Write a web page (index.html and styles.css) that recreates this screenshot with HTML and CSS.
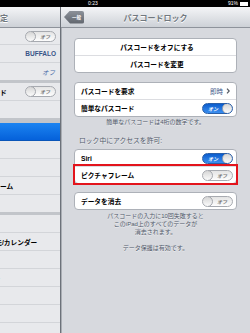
FILE: index.html
```html
<!DOCTYPE html>
<html lang="ja">
<head>
  <meta charset="UTF-8" />
  <meta name="viewport" content="width=device-width, initial-scale=1.0"/>
  <title>パスコードロック</title>
  <link rel="stylesheet" href="styles.css">
</head>
<body>
  <!-- Status bar -->
  <div class="statusbar">
    <span class="clock">0:23</span>
    <span class="battery">91% <i class="battery-icon"></i></span>
  </div>

  <div class="split">
    <!-- Master list (cut off on the left) -->
    <aside class="master">
      <div class="navbar"><span class="master-title">設定</span></div>
      <ul class="menu">
        <li class="menu-row first"><span class="menu-label">機内モード</span><span class="switch off"><span class="knob"></span><span class="state">オフ</span></span></li>
        <li class="menu-row"><span class="menu-label">Wi-Fi</span><span class="menu-value">BUFFALO</span></li>
        <li class="menu-row section-end"><span class="menu-label">Bluetooth</span><span class="menu-value light">オフ</span></li>
        <li class="menu-row"><span class="menu-label">おやすみモード</span><span class="switch off"><span class="knob"></span><span class="state">オフ</span></span></li>
        <li class="menu-row section-end wide"><span class="menu-label">通知</span></li>
        <li class="menu-row selected"><span class="menu-label">一般</span></li>
        <li class="menu-row"><span class="menu-label">サウンド</span></li>
        <li class="menu-row"><span class="menu-label">明るさ/壁紙</span></li>
        <li class="menu-row"><span class="menu-label">ピクチャフレーム</span></li>
        <li class="menu-row section-end"><span class="menu-label">プライバシー</span></li>
        <li class="menu-row"><span class="menu-label">iCloud</span></li>
        <li class="menu-row"><span class="menu-label">メール/連絡先/カレンダー</span></li>
        <li class="menu-row"><span class="menu-label">メモ</span></li>
        <li class="menu-row"><span class="menu-label">リマインダー</span></li>
        <li class="menu-row"><span class="menu-label">メッセージ</span></li>
        <li class="menu-row"><span class="menu-label">FaceTime</span></li>
        <li class="menu-row"><span class="menu-label">マップ</span></li>
      </ul>
    </aside>

    <!-- Detail pane -->
    <main class="detail">
      <div class="navbar detail-nav">
        <button class="back">一般</button>
        <h1 class="title">パスコードロック</h1>
      </div>

      <div class="content">
        <div class="group">
          <div class="cell center">パスコードをオフにする</div>
          <div class="cell center">パスコードを変更</div>
        </div>

        <div class="group">
          <div class="cell">パスコードを要求<span class="detail-value">即時
            <svg class="chevron" viewBox="0 0 4 6" width="4" height="6"><path d="M1 0.6 L3.2 3 L1 5.4" fill="none" stroke="#555a63" stroke-width="1.2"/></svg></span></div>
          <div class="cell">簡単なパスコード<span class="switch on"><span class="state">オン</span><span class="knob"></span></span></div>
        </div>
        <p class="footnote">簡単なパスコードは4桁の数字です。</p>

        <p class="section-header">ロック中にアクセスを許可:</p>
        <div class="group tight">
          <div class="cell">Siri<span class="switch on"><span class="state">オン</span><span class="knob"></span></span></div>
          <div class="cell highlight">ピクチャフレーム<span class="switch off"><span class="knob"></span><span class="state">オフ</span></span></div>
        </div>

        <div class="group spaced">
          <div class="cell">データを消去<span class="switch off"><span class="knob"></span><span class="state">オフ</span></span></div>
        </div>
        <p class="footnote">パスコードの入力に10回失敗すると<br>このiPad上のすべてのデータが<br>消去されます。</p>
        <p class="footnote last">データ保護は有効です。</p>
      </div>
    </main>
  </div>
</body>
</html>
```

FILE: styles.css
```css
:root {
  --nav-title: #71787f;
  --detail-blue: #385487;
  --footer-text: #535b6b;
  --group-bg: #d7d9de;
}

* {
  box-sizing: border-box;
  margin: 0;
  padding: 0;
}

body {
  width: 250px;
  height: 333px;
  overflow: hidden;
  font-family: "Liberation Sans", "Noto Sans CJK JP", sans-serif;
  background: var(--group-bg);
  color: #000;
}

/* Status bar */
.statusbar {
  height: 7px;
  background: #000;
  color: #fff;
  display: flex;
  align-items: center;
  font-size: 5px;
  line-height: 7px;
  padding-right: 2px;
}

.clock {
  margin-left: 88px;
}

.battery {
  margin-left: auto;
  display: flex;
  align-items: center;
  gap: 2px;
}

.battery-icon {
  display: block;
  width: 8px;
  height: 4px;
  background: #fff;
  border: 1px solid #fff;
}

.split {
  display: flex;
  height: 326px;
}

/* Nav bars */
.navbar {
  height: 21px;
  background: linear-gradient(#f4f5f7, #cdd1d7);
  border-bottom: 1px solid #8e939b;
  display: flex;
  align-items: center;
}

.master {
  width: 61px;
  flex: none;
  background: #e8e9ec;
  border-right: 1px solid #6c7179;
  overflow: hidden;
}

.master-title {
  font-size: 8px;
  font-weight: bold;
  color: var(--nav-title);
  margin-left: -8px;
  white-space: nowrap;
  text-shadow: 0 1px 0 #fff;
}

/* Master list */
.menu {
  list-style: none;
}

.menu-row {
  height: 18px;
  display: flex;
  align-items: center;
  padding-right: 4px;
  border-bottom: 1px solid #d3d5d9;
  font-size: 6.7px;
  font-weight: bold;
  white-space: nowrap;
}

.menu-row.first {
  height: 17px;
}

.menu-row.section-end {
  height: 20px;
  border-bottom: 3px solid #c2c5ca;
}

.menu-row.wide {
  height: 22px;
  border-bottom-width: 5px;
}

.menu-row.selected {
  background: linear-gradient(#1c84f1, #0561da);
  border-bottom-color: #0a55b8;
  color: #fff;
}

.menu-label {
  flex: none;
  margin-left: -40px;
}

.menu-value {
  margin-left: auto;
  color: var(--detail-blue);
  font-size: 6.5px;
}

.menu-value.light {
  font-weight: normal;
  font-style: italic;
  color: #4a6ea9;
  margin-right: 1px;
}

/* Switches */
.switch {
  margin-left: auto;
  flex: none;
  width: 31px;
  height: 11px;
  border-radius: 6px;
  border: 1px solid #a7aab0;
  display: flex;
  align-items: center;
  font-size: 5px;
  font-weight: bold;
  font-style: italic;
  overflow: hidden;
}

.switch.off {
  background: linear-gradient(#e4e4e4, #fdfdfd);
  color: #7a7a7a;
}

.switch.on {
  background: linear-gradient(#0b5ccd, #3b8ff0);
  border-color: #2a5fa8;
  color: #fff;
}

.switch .state {
  flex: 1;
  text-align: center;
}

.knob {
  flex: none;
  width: 11px;
  height: 11px;
  margin: -1px;
  border-radius: 50%;
  border: 1px solid #a3a6ac;
  background: linear-gradient(#d6d6d6, #fbfbfb);
}

/* Detail */
.detail {
  flex: 1;
  display: flex;
  flex-direction: column;
  box-shadow: inset 1px 0 0 #a9adb3;
}

.detail-nav {
  display: grid;
  grid-template-columns: 1fr auto 1fr;
  padding: 0 3px;
}

.back {
  justify-self: start;
  width: 20px;
  height: 13px;
  border: none;
  background: linear-gradient(#8c9199, #60656d);
  clip-path: polygon(0 50%, 6px 0, 100% 0, 100% 100%, 6px 100%);
  border-radius: 0 2px 2px 0;
  color: #fff;
  font-family: inherit;
  font-size: 4.5px;
  font-weight: bold;
  padding-left: 5px;
}

.title {
  font-size: 8px;
  font-weight: bold;
  color: var(--nav-title);
  text-shadow: 0 1px 0 #fff;
}

.content {
  padding: 10px 13px 0;
}

.group {
  background: #fff;
  border: 1px solid #adb1b8;
  border-radius: 4px;
}

.group + .group {
  margin-top: 9px;
}

.group.tight {
  margin-top: 4px;
}

.group.spaced {
  margin-top: 8px;
}

.cell {
  height: 16px;
  display: flex;
  align-items: center;
  padding: 0 3px 0 6px;
  font-size: 6.7px;
  font-weight: bold;
  white-space: nowrap;
}

.cell + .cell {
  height: 17px;
  border-top: 1px solid #dcdde1;
}

.cell.center {
  justify-content: center;
}

.cell.highlight {
  outline: 2px solid #e3141c;
  position: relative;
}

.detail-value {
  margin-left: auto;
  display: flex;
  align-items: center;
  gap: 3px;
  font-size: 6.5px;
  font-weight: normal;
  color: var(--detail-blue);
  padding-right: 3px;
}

.chevron {
  display: block;
}

.footnote {
  margin-top: 1px;
  font-size: 6px;
  line-height: 8px;
  color: var(--footer-text);
  text-align: center;
  text-shadow: 0 1px 0 rgba(255,255,255,0.5);
}

.group.spaced + .footnote {
  margin-top: 2px;
}

.footnote.last {
  margin-top: 8px;
}

.section-header {
  margin-top: 11px;
  padding-left: 5px;
  font-size: 6.8px;
  line-height: 8px;
  color: var(--footer-text);
  text-shadow: 0 1px 0 rgba(255,255,255,0.5);
}
```
